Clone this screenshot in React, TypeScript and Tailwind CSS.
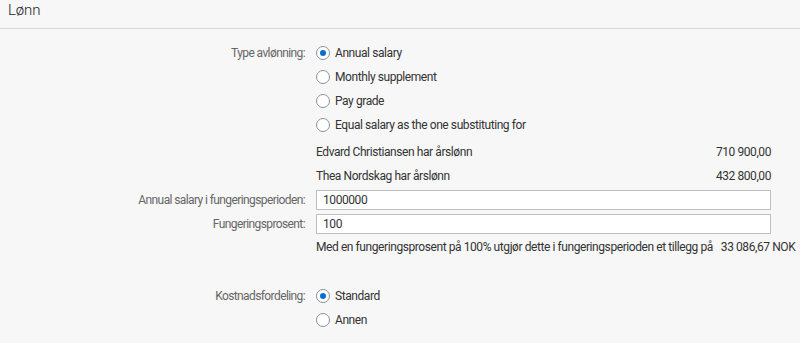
import React from "react";

const font = { fontFamily: 'Roboto, "Liberation Sans", Arial, sans-serif' };

function Radio({ checked }: { checked?: boolean }) {
  return (
    <span className="flex h-[14px] w-[14px] shrink-0 items-center justify-center rounded-full border border-[#8a8f96] bg-white">
      {checked && <span className="h-[6px] w-[6px] rounded-full bg-[#0a6ed1]" />}
    </span>
  );
}

function Row({
  label,
  children,
  className = "",
}: {
  label?: string;
  children?: React.ReactNode;
  className?: string;
}) {
  return (
    <div className={"grid grid-cols-[305px_1fr] gap-x-[11px] pr-[29px] " + className}>
      <div className="flex items-center justify-end whitespace-nowrap text-[12px] tracking-[-0.6px] text-[#666]">{label}</div>
      <div className="flex min-w-0 items-center whitespace-nowrap text-[12px] tracking-[-0.42px] text-[#333]">{children}</div>
    </div>
  );
}

function RadioOpt({ label, checked }: { label: string; checked?: boolean }) {
  return (
    <div className="flex items-center gap-[5px]">
      <Radio checked={checked} />
      <span>{label}</span>
    </div>
  );
}

export default function App() {
  return (
    <div className="h-[343px] w-[800px] overflow-hidden bg-[#f7f7f7]" style={font}>
      <div className="flex h-[29px] items-center border-b border-[#d9d9d9] pb-[7px] pl-[8px] text-[15px] font-light tracking-[-0.1px] text-[#222]">
        Lønn
      </div>
      <div className="pt-[12px]">
        <Row label="Type avlønning:" className="h-[24px]">
          <RadioOpt label="Annual salary" checked />
        </Row>
        <Row className="h-[24px]">
          <RadioOpt label="Monthly supplement" />
        </Row>
        <Row className="h-[24px]">
          <RadioOpt label="Pay grade" />
        </Row>
        <Row className="h-[24px]">
          <RadioOpt label="Equal salary as the one substituting for" />
        </Row>
        <Row className="mt-[3px] h-[24px]">
          <div className="flex w-full justify-between">
            <span>Edvard Christiansen har årslønn</span>
            <span>710 900,00</span>
          </div>
        </Row>
        <Row className="h-[24px]">
          <div className="flex w-full justify-between">
            <span>Thea Nordskag har årslønn</span>
            <span>432 800,00</span>
          </div>
        </Row>
        <Row label="Annual salary i fungeringsperioden:" className="mt-[2px] h-[20px]">
          <div className="flex h-[20px] w-full items-center border border-[#bfbfbf] bg-white px-[6px]">1000000</div>
        </Row>
        <Row label="Fungeringsprosent:" className="mt-[4px] h-[20px]">
          <div className="flex h-[20px] w-full items-center border border-[#bfbfbf] bg-white px-[6px]">100</div>
        </Row>
        <Row className="mt-[1px] h-[24px]">
          <div className="flex w-full justify-between gap-[8px]">
            <span>Med en fungeringsprosent på 100% utgjør dette i fungeringsperioden et tillegg på</span>
            <span className="shrink-0">33 086,67 NOK</span>
          </div>
        </Row>
        <Row label="Kostnadsfordeling:" className="mt-[25px] h-[24px]">
          <RadioOpt label="Standard" checked />
        </Row>
        <Row className="h-[24px]">
          <RadioOpt label="Annen" />
        </Row>
      </div>
    </div>
  );
}
